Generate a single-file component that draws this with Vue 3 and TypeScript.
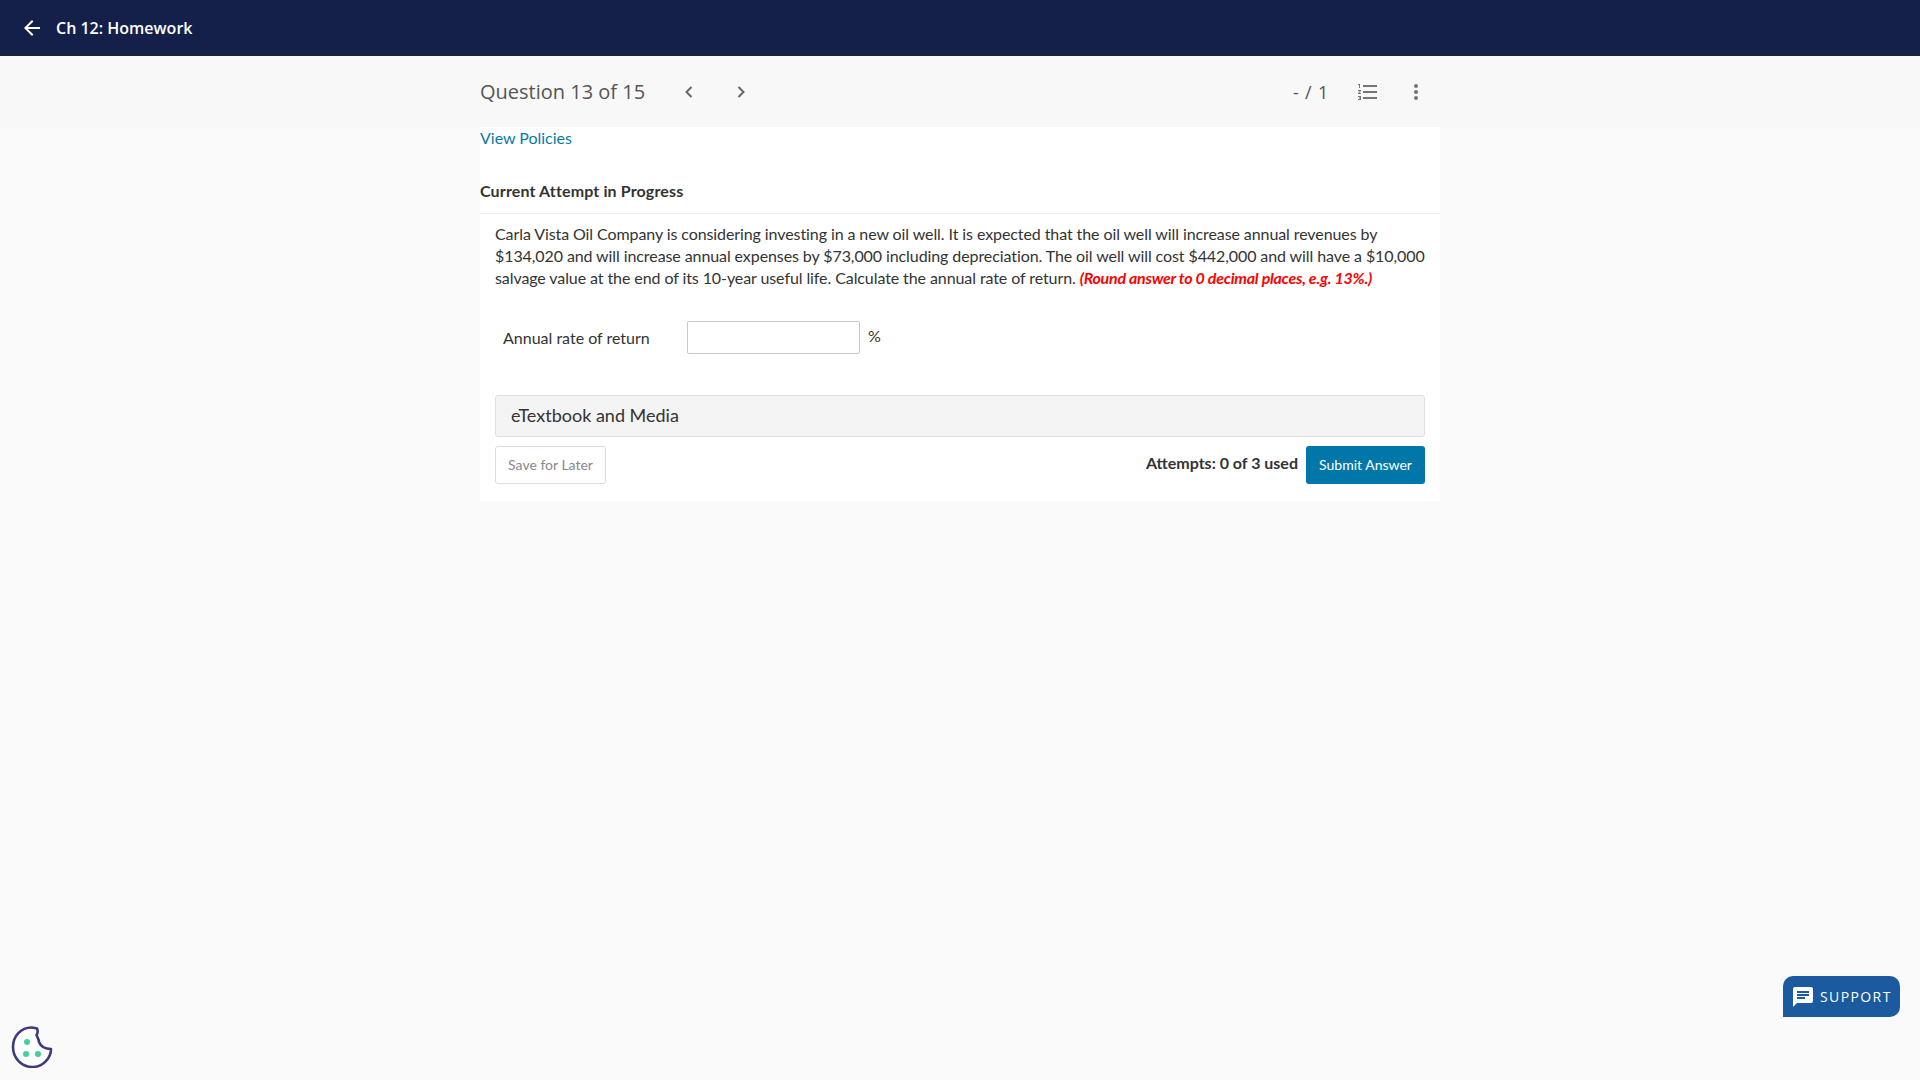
<script setup lang="ts">
const title: string = 'Ch 12: Homework'
</script>

<template>
  <div class="page">
    <header class="topbar">
      <svg class="back" width="24" height="24" viewBox="0 0 24 24"><path d="M20 11H7.83l5.59-5.59L12 4l-8 8 8 8 1.41-1.41L7.83 13H20z" fill="#fff"/></svg>
      <span class="title">{{ title }}</span>
    </header>
    <div class="subbar">
      <div class="subinner">
        <span class="qnum">Question 13 of 15</span>
        <svg class="chev first" width="24" height="24" viewBox="0 0 24 24"><path d="M14.500 7 9.500 12l5 5" fill="none" stroke="#666" stroke-width="2"/></svg>
        <svg class="chev" width="24" height="24" viewBox="0 0 24 24"><path d="M9.500 7l5 5-5 5" fill="none" stroke="#666" stroke-width="2"/></svg>
        <span class="score">- / 1</span>
        <svg class="listicon" width="24" height="24" viewBox="0 0 24 24" fill="#757575"><path d="M2 17h2v.5H3v1h1v.5H2v1h3v-4H2zm1-9h1V4H2v1h1zm-1 3h1.8L2 13.1v.9h3v-1H3.2L5 10.9V10H2zm5-6v2h14V5zm0 14h14v-2H7zm0-6h14v-2H7z"/></svg>
        <svg class="moreicon" width="24" height="24" viewBox="0 0 24 24" fill="#757575"><circle cx="12" cy="6" r="2"/><circle cx="12" cy="12" r="2"/><circle cx="12" cy="18" r="2"/></svg>
      </div>
    </div>
    <main class="card">
      <a class="policies">View Policies</a>
      <div class="attempt">Current Attempt in Progress</div>
      <section class="question">
        <p class="text">Carla Vista Oil Company is considering investing in a new oil well. It is expected that the oil well will increase annual revenues by $134,020 and will increase annual expenses by $73,000 including depreciation. The oil well will cost $442,000 and will have a $10,000 salvage value at the end of its 10-year useful life. Calculate the annual rate of return. <em class="hint">(Round answer to 0 decimal places, e.g. 13%.)</em></p>
        <div class="answer">
          <label class="lbl">Annual rate of return</label>
          <input class="field" type="text" />
          <span class="pct">%</span>
        </div>
        <div class="media">eTextbook and Media</div>
        <div class="actions">
          <button class="save">Save for Later</button>
          <span class="used">Attempts: 0 of 3 used</span>
          <button class="submit">Submit Answer</button>
        </div>
      </section>
    </main>
    <button class="support">
      <svg width="24" height="24" viewBox="0 0 24 24"><path d="M20 2H4a2 2 0 0 0-2 2v18l4-4h14a2 2 0 0 0 2-2V4a2 2 0 0 0-2-2z" fill="#fff"/><path d="M6 9h12v2H6zm0 3h8v2H6zm0-6h12v2H6z" fill="#1b5a9e"/></svg>
      <span>SUPPORT</span>
    </button>
    <svg class="cookie" width="44" height="44" viewBox="0 0 44 44">
      <path d="M27 4.500C25 4 23.500 3.500 21.500 3.500 11 3.500 3 12 3 23c0 11 8.500 20 19.500 20C33 43 41 34 41 25c-6 0-10-2-12-7 0-3-2-5-2.500-7C28 9 28 7 27 4.500z" fill="#fff" stroke="#3d3a80" stroke-width="2.600" stroke-linejoin="round"/>
      <circle cx="17" cy="18" r="3" fill="#3fd39a"/><circle cx="16" cy="30" r="3" fill="#3fd39a"/><circle cx="28" cy="30" r="3" fill="#3fd39a"/>
    </svg>
  </div>
</template>

<style>
html, body { margin: 0; background: #fafafa; }
</style>

<style scoped>
.page { min-height: 1080px; background: #fafafa; font-family: Lato, "Liberation Sans", sans-serif; color: #333; position: relative; overflow: hidden; }
.topbar { height: 56px; background: #14204a; display: flex; align-items: center; padding-left: 20px; box-sizing: border-box; }
.back { margin-right: 12px; }
.title { color: #fff; font: 600 16px "Open Sans", sans-serif; }
.subbar { height: 71px; background: #f8f8f8; }
.subinner { width: 960px; height: 71px; margin: 0 auto; display: flex; align-items: center; }
.qnum { font: 400 20px "Open Sans", sans-serif; color: #555; width: 197px; }
.chev { margin-right: 28px; }
.score { margin-left: auto; font: 400 18px "Open Sans", sans-serif; color: #555; letter-spacing: .8px; margin-right: 27px; }
.listicon { margin-right: 24px; }
.moreicon { margin-right: 12px; }
.card { width: 960px; height: 374px; margin: 0 auto; background: #fff; box-sizing: border-box; display: flex; flex-direction: column; }
.policies { font-size: 16px; line-height: 20px; color: #0a7aa8; margin-top: 1px; letter-spacing: -.02px; }
.attempt { font-size: 16px; font-weight: 700; color: #333; line-height: 20px; margin-top: 33px; padding-bottom: 12px; border-bottom: 1px solid #ececec; letter-spacing: .14px; }
.question { padding: 9px 15px 0; display: flex; flex-direction: column; }
.text { margin: 0; font-size: 16px; line-height: 22px; color: #333; letter-spacing: -.09px; }
.hint { color: #f00; font-weight: 700; letter-spacing: -.27px; }
.answer { display: flex; align-items: center; padding-left: 8px; margin-top: 31px; height: 34px; }
.lbl { font-size: 16px; width: 184px; margin-top: 1px; }
.field { width: 173px; height: 33px; box-sizing: border-box; border: 1px solid #c9c9c9; border-radius: 2px; background: #fff; padding: 0; }
.pct { font-size: 16px; margin-left: 8px; margin-top: -4px; }
.media { margin-top: 41px; height: 42px; box-sizing: border-box; background: #f4f4f4; border: 1px solid #e0e0e0; border-radius: 3px; font-size: 18px; line-height: 38px; padding-left: 15px; }
.actions { display: flex; align-items: center; margin-top: 9px; }
.save { height: 38px; width: 111px; background: #fff; border: 1px solid #ddd; border-radius: 3px; color: #888; font: 400 14px Lato, sans-serif; padding: 0 0 2px; }
.used { margin-left: auto; font-weight: 700; font-size: 16px; margin-right: 8px; margin-top: -5px; }
.submit { height: 38px; width: 119px; background: #0077a8; border: 0; border-radius: 3px; color: #fff; font: 400 14px Lato, sans-serif; padding: 0 0 2px; }
.support { position: absolute; right: 20px; bottom: 63px; width: 117px; height: 41px; background: #1b5a9e; border: 0; border-radius: 10px 10px 10px 0; color: #fff; display: flex; align-items: center; gap: 5px; padding: 0 0 0 8px; font: 400 14px "Open Sans", sans-serif; letter-spacing: 1.4px; }
.cookie { position: absolute; left: 10px; bottom: 12px; }
</style>
